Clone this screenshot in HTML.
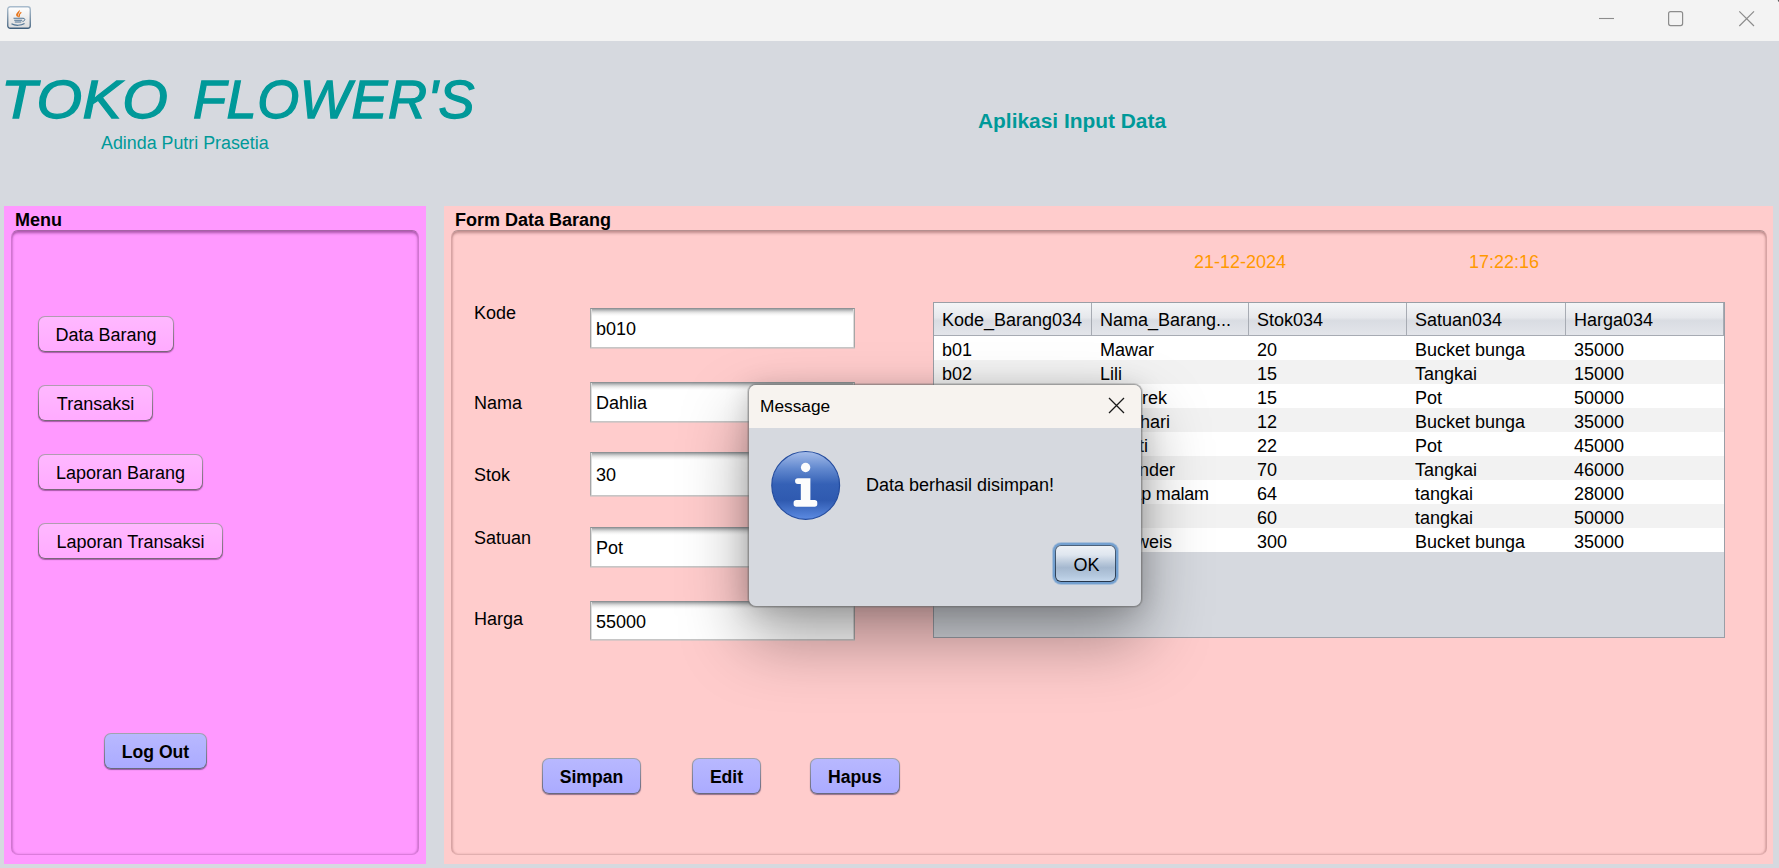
<!DOCTYPE html>
<html lang="id">
<head>
<meta charset="utf-8">
<title>Toko Flower's - Form Data Barang</title>
<style>
*{box-sizing:border-box;margin:0;padding:0}
html,body{width:1779px;height:868px;overflow:hidden}
body{background:#d6d9df;font-family:"Liberation Sans",sans-serif;font-size:18px;color:#000;position:relative}
.abs{position:absolute}
.t{position:absolute;white-space:nowrap;line-height:1}
#titlebar{position:absolute;left:0;top:0;width:1779px;height:41px;background:#f3f3f3}
.shop{top:72px;font-size:54px;font-style:italic;color:#009999;-webkit-text-stroke:1.3px #009999}
#owner{left:101px;top:135px;color:#009999;font-size:17.85px}
#app{left:978px;top:111px;font-size:20.9px;font-weight:bold;color:#009999}
.panel{position:absolute;top:206px;height:658px}
#menu{left:4px;width:422px;background:#ff99ff}
#form{left:444px;width:1329px;background:#ffcccc}
.ptitle{position:absolute;top:5px;font-weight:bold;font-size:18px;line-height:1;white-space:nowrap}
.inner{position:absolute;top:24px;bottom:9px;border-radius:7px}
#menu .inner{left:7px;right:7px;border:1px solid;border-color:#a662a6 rgba(170,90,170,.55) rgba(190,100,190,.55) rgba(170,90,170,.55);box-shadow:inset 0 4px 3px -2px rgba(100,30,100,.55), inset 3px 0 2px -2px rgba(120,40,120,.3), inset -3px 0 2px -2px rgba(120,40,120,.3), inset 0 -2px 2px -2px rgba(120,40,120,.3)}
#form .inner{left:7px;right:6px;border:1px solid;border-color:#b48f8f rgba(175,125,125,.5) rgba(195,145,145,.5) rgba(175,125,125,.5);box-shadow:inset 0 4px 3px -2px rgba(100,50,50,.42), inset 3px 0 2px -2px rgba(120,60,60,.25), inset -3px 0 2px -2px rgba(120,60,60,.25), inset 0 -2px 2px -2px rgba(120,60,60,.25)}
.btn{position:absolute;height:36px;border-radius:7px;text-align:center;line-height:36px;white-space:nowrap}
.mbtn{border:1px solid transparent;background:linear-gradient(#ffb8ff,#ffabff) padding-box,linear-gradient(#b09eb0,#8a788a 60%,#786678) border-box;box-shadow:0 1px 1px rgba(100,40,100,.55)}
.bbtn{border:1px solid transparent;background:linear-gradient(#b8b8ff,#ababff) padding-box,linear-gradient(#a0a4b0,#7e7e92 60%,#68687c) border-box;font-weight:bold;font-size:17.6px;box-shadow:0 1px 1px rgba(60,40,90,.55)}
.field{position:absolute;left:590px;width:265px;height:40px;background:linear-gradient(#9a9da0 0,#b4b6b8 1px,#dedede 3px,#f4f4f4 5px,#fff 7px);border:1px solid;border-color:#8e9295 #a6a6a6 #c6c6c6 #a6a6a6;box-shadow:inset 1px 0 0 #dcdcdc,inset -1px 0 0 #dcdcdc,0 1px 0 rgba(205,195,195,.7);padding-left:5px;line-height:40px;white-space:nowrap}

#tbl{position:absolute;left:933px;top:302px;width:792px;height:336px;background:#d6d9df;border:1px solid #9a9ea6}
#thead{position:absolute;left:0;top:0;width:790px;height:33px;background:linear-gradient(#f4f5f7,#e6e8ec 45%,#d9dce2 55%,#e3e5ea);border-bottom:1px solid #a7abb3}
#thead div{position:absolute;top:0;height:32px;line-height:34px;padding-left:8px;border-right:1px solid #a7abb3;white-space:nowrap;overflow:hidden}
.row{position:absolute;left:0;width:790px;height:24px;background:#fff}
.row.alt{background:#f2f2f2}
.row span{position:absolute;top:0;line-height:28px;white-space:nowrap}
#dlg{position:absolute;left:749px;top:385px;width:392px;height:221px;border-radius:7px;background:#d6d9df;overflow:hidden;box-shadow:0 0 0 1px rgba(105,105,105,.42),0 0 0 2px rgba(105,105,105,.24)}
#dlgshadow{position:absolute;left:749px;top:385px;width:392px;height:221px;border-radius:8px;box-shadow:0 32px 66px 2px rgba(0,0,0,.35), 0 3px 26px rgba(0,0,0,.17)}
#dlgbar{position:absolute;left:0;top:0;width:100%;height:43px;background:#f7f3ef}
#dlgbar .t{left:11px;top:13px;font-size:17.3px}
#ok{position:absolute;left:306px;top:160px;width:61px;height:37px;border-radius:6px;border:1px solid transparent;background:linear-gradient(#edf1f6 0,#dfe6ef 25%,#b6c6d9 50%,#a5b8cf 62%,#b4c8de 85%,#c3d6eb 100%) padding-box,linear-gradient(#4d627a,#3c5068 50%,#26364a) border-box;text-align:center;line-height:39px;padding-left:2px;box-shadow:0 0 0 2px #73a0d0, 0 0 0 3px rgba(115,160,208,.45)}
</style>
</head>
<body>
<div id="titlebar"></div>
<div class="t shop" id="shop1" style="left:1px;letter-spacing:0.6px;transform:scaleX(1.085);transform-origin:0 0">TOKO</div><div class="t shop" id="shop2" style="left:193px;letter-spacing:0.6px">FLOWER'S</div>
<div class="t" id="owner">Adinda Putri Prasetia</div>
<div class="t" id="app">Aplikasi Input Data</div>

<div class="panel" id="menu">
  <div class="ptitle" style="left:11px">Menu</div>
  <div class="inner"></div>
</div>
<div class="panel" id="form">
  <div class="ptitle" style="left:11px">Form Data Barang</div>
  <div class="inner"></div>
</div>

<!-- menu buttons -->
<div class="btn mbtn" style="left:38px;top:316px;width:136px">Data Barang</div>
<div class="btn mbtn" style="left:38px;top:385px;width:115px">Transaksi</div>
<div class="btn mbtn" style="left:38px;top:454px;width:165px">Laporan Barang</div>
<div class="btn mbtn" style="left:38px;top:523px;width:185px">Laporan Transaksi</div>
<div class="btn bbtn" style="left:104px;top:733px;width:103px">Log Out</div>

<!-- form labels -->
<div class="t" style="left:474px;top:304px">Kode</div>
<div class="t" style="left:474px;top:394px">Nama</div>
<div class="t" style="left:474px;top:466px">Stok</div>
<div class="t" style="left:474px;top:529px">Satuan</div>
<div class="t" style="left:474px;top:610px">Harga</div>

<!-- fields -->
<div class="field" style="top:308px">b010</div>
<div class="field" style="top:382px">Dahlia</div>
<div class="field" style="top:452px;height:44px;line-height:45px">30</div>
<div class="field" style="top:527px">Pot</div>
<div class="field" style="top:601px;height:39px">55000</div>

<!-- date / time -->
<div class="t" style="left:1194px;top:253px;color:#ff9900">21-12-2024</div>
<div class="t" style="left:1469px;top:253px;color:#ff9900">17:22:16</div>

<!-- action buttons -->
<div class="btn bbtn" style="left:542px;top:758px;width:99px">Simpan</div>
<div class="btn bbtn" style="left:692px;top:758px;width:69px">Edit</div>
<div class="btn bbtn" style="left:810px;top:758px;width:90px">Hapus</div>
<div id="tbl">
<div id="thead"><div style="left:0px;width:158px">Kode_Barang034</div><div style="left:158px;width:157px">Nama_Barang...</div><div style="left:315px;width:158px">Stok034</div><div style="left:473px;width:159px">Satuan034</div><div style="left:632px;width:158px">Harga034</div></div>
<div class="row" style="top:33px"><span style="left:8px">b01</span><span style="left:166px">Mawar</span><span style="left:323px">20</span><span style="left:481px">Bucket bunga</span><span style="left:640px">35000</span></div>
<div class="row alt" style="top:57px"><span style="left:8px">b02</span><span style="left:166px">Lili</span><span style="left:323px">15</span><span style="left:481px">Tangkai</span><span style="left:640px">15000</span></div>
<div class="row" style="top:81px"><span style="left:8px">b03</span><span style="left:166px">Anggrek</span><span style="left:323px">15</span><span style="left:481px">Pot</span><span style="left:640px">50000</span></div>
<div class="row alt" style="top:105px"><span style="left:8px">b04</span><span style="left:166px">Matahari</span><span style="left:323px">12</span><span style="left:481px">Bucket bunga</span><span style="left:640px">35000</span></div>
<div class="row" style="top:129px"><span style="left:8px">b05</span><span style="left:166px">Melati</span><span style="left:323px">22</span><span style="left:481px">Pot</span><span style="left:640px">45000</span></div>
<div class="row alt" style="top:153px"><span style="left:8px">b06</span><span style="left:166px">Lavender</span><span style="left:323px">70</span><span style="left:481px">Tangkai</span><span style="left:640px">46000</span></div>
<div class="row" style="top:177px"><span style="left:8px">b07</span><span style="left:166px;letter-spacing:-0.2px">Sedap malam</span><span style="left:323px">64</span><span style="left:481px">tangkai</span><span style="left:640px">28000</span></div>
<div class="row alt" style="top:201px"><span style="left:8px">b08</span><span style="left:166px">Tulip</span><span style="left:323px">60</span><span style="left:481px">tangkai</span><span style="left:640px">50000</span></div>
<div class="row" style="top:225px"><span style="left:8px">b09</span><span style="left:166px">Edelweis</span><span style="left:323px">300</span><span style="left:481px">Bucket bunga</span><span style="left:640px">35000</span></div>
</div>

<div id="dlgshadow"></div>
<div id="dlg">
  <div id="dlgbar"><div class="t">Message</div>
    <svg class="abs" style="left:359px;top:12px" width="17" height="17" viewBox="0 0 17 17"><path d="M1 1 L16 16 M16 1 L1 16" stroke="#1a1a1a" stroke-width="1.3" fill="none"/></svg>
  </div>
  <svg class="abs" style="left:21px;top:64px" width="72" height="72" viewBox="0 0 72 72">
    <defs>
      <linearGradient id="ig" x1="0" y1="0" x2="0" y2="1"><stop offset="0" stop-color="#a6bdea"/><stop offset=".25" stop-color="#6289cf"/><stop offset=".48" stop-color="#3561b6"/><stop offset=".72" stop-color="#2f5ab0"/><stop offset="1" stop-color="#5c8be2"/></linearGradient>
    </defs>
    <circle cx="35.700" cy="36.400" r="33.900" fill="url(#ig)" stroke="#244c9e" stroke-width="1.200"/>
    <circle cx="35.600" cy="18.500" r="4.700" fill="#fcfcfc"/>
    <path d="M27.900 29.200 H40.400 V51 H44.500 a2.800 2.800 0 0 1 2.800 2.800 V55 a2.700 2.700 0 0 1 -2.700 2.700 H26.300 a2.700 2.700 0 0 1 -2.700 -2.700 V53.800 a2.800 2.800 0 0 1 2.800 -2.800 H30.800 V34.900 H27.900 a2.850 2.850 0 0 1 0 -5.700 z" fill="#fcfcfc"/>
  </svg>
  <div class="t" style="left:117px;top:91px">Data berhasil disimpan!</div>
  <div id="ok">OK</div>
</div>

<!-- window chrome -->
<svg class="abs" style="left:7px;top:6px" width="24" height="23" viewBox="0 0 24 23">
  <defs><linearGradient id="jg" x1="0" y1="0" x2="0" y2="1"><stop offset="0" stop-color="#ffffff"/><stop offset="1" stop-color="#dcdcdc"/></linearGradient>
  <linearGradient id="jb" x1="0" y1="0" x2="0" y2="1"><stop offset="0" stop-color="#a9bccd"/><stop offset="1" stop-color="#3f5f7c"/></linearGradient></defs>
  <rect x=".75" y=".75" width="22.5" height="21.5" rx="2.5" fill="url(#jg)" stroke="url(#jb)" stroke-width="1.3"/>
  <path d="M12.700 3.800 C11.200 6 8.500 7.500 9.300 9.700 C9.800 10.900 11.600 10.700 12.300 12 C12.700 10.500 10.700 9.700 11.300 8.200 C11.800 7 13.100 5.900 12.700 3.800Z" fill="#e8761c"/>
  <path d="M14.300 6.300 C12.700 7.500 11.700 8.800 12.500 10.700" stroke="#e8761c" stroke-width="1.100" fill="none"/>
  <path d="M6.5 12.3 h9.500 M7.200 14.200 h8 M7.800 16 h6.500" stroke="#4f7393" stroke-width="1.1" fill="none"/>
  <path d="M16 12.300 c2.500 -.3 2.500 2.700 -.5 3.200" stroke="#4f7393" stroke-width="1" fill="none"/>
  <path d="M4.500 17.800 C8 19.800 14 19.800 17.500 17.600" stroke="#4f7393" stroke-width="1.2" fill="none"/>
</svg>
<svg class="abs" style="left:1590px;top:0" width="189" height="41" viewBox="0 0 189 41">
  <path d="M9 18.5 H24" stroke="#8c8c8c" stroke-width="1.100" fill="none"/>
  <rect x="78.600" y="11.600" width="14" height="14" rx="2" fill="none" stroke="#8c8c8c" stroke-width="1.200"/>
  <path d="M149.300 11.300 L164 26 M164 11.300 L149.300 26" stroke="#8c8c8c" stroke-width="1.200" fill="none"/>
</svg>
<div class="abs" style="right:0;top:0;width:3px;height:2px;background:radial-gradient(circle at 0 100%,rgba(70,70,70,0) 2px,#505050 3px)"></div>
</body>
</html>
